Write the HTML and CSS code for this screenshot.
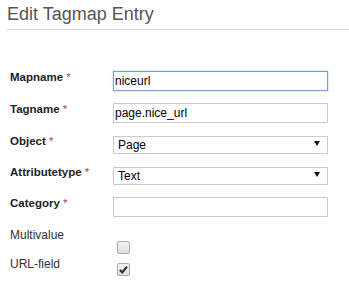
FILE: index.html
```html
<!DOCTYPE html>
<html>
<head>
    <title>Edit Tagmap Entry</title>
    <link rel="stylesheet" href="styles.css">
</head>
<body>
    <div class="page-header">
        <h1>Edit Tagmap Entry</h1>
    </div>

    <form class="tagmap-form">
        <div class="form-row">
            <label class="req" for="mapname">Mapname <span class="star">*</span></label>
            <input id="mapname" class="field focused" type="text" value="niceurl">
        </div>
        <div class="form-row">
            <label class="req" for="tagname">Tagname <span class="star">*</span></label>
            <input id="tagname" class="field" type="text" value="page.nice_url">
        </div>
        <div class="form-row">
            <label class="req" for="object">Object <span class="star">*</span></label>
            <span class="select-wrap">
                <select id="object" class="field select">
                    <option>Page</option>
                </select>
            </span>
        </div>
        <div class="form-row">
            <label class="req" for="attrtype">Attributetype <span class="star">*</span></label>
            <span class="select-wrap">
                <select id="attrtype" class="field select">
                    <option>Text</option>
                </select>
            </span>
        </div>
        <div class="form-row">
            <label class="req" for="category">Category <span class="star">*</span></label>
            <input id="category" class="field" type="text" value="">
        </div>
        <div class="form-row check-row multi">
            <label>Multivalue</label>
            <span class="check"></span>
        </div>
        <div class="form-row check-row url">
            <label>URL-field</label>
            <span class="check checked">
                <svg width="11" height="11" viewBox="0 0 11 11">
                    <path d="M1.8 6 L4.2 8.4 L9 2.6" fill="none" stroke="#2b2b2b" stroke-width="2"/>
                </svg>
            </span>
        </div>
    </form>
</body>
</html>
```

FILE: styles.css
```css
body {
    margin: 0;
    font-family: "Liberation Sans", Arial, sans-serif;
    background: #fff;
    color: #333;
}
.page-header {
    margin-left: 6px;
    padding: 4px 0 4px 1px;
    border-bottom: 1px solid #ddd;
}
.page-header h1 {
    margin: 0;
    font-size: 18px;
    font-weight: normal;
    line-height: 21px;
    color: #555;
}
.tagmap-form {
    padding: 41px 0 0 10px;
}
.form-row {
    display: flex;
    align-items: flex-start;
    margin-bottom: 12px;
}
.form-row label {
    flex: 0 0 103px;
    font-size: 12px;
    line-height: 13px;
    color: #333;
}
.form-row label.req {
    font-size: 11.5px;
    font-weight: bold;
    color: #1e1e1e;
}
.star {
    font-weight: normal;
    color: #a94442;
}
.field {
    box-sizing: border-box;
    width: 215px;
    height: 20px;
    margin: 0;
    padding: 0 0 0 1px;
    border: 1px solid #ccc;
    border-radius: 0;
    font-family: "Liberation Sans", Arial, sans-serif;
    font-size: 12px;
    color: #000;
    background: #fff;
    outline: none;
}
.field.focused {
    border-color: #76a2da;
    box-shadow: 0 0 2px #a6c6ee;
}
.select-wrap {
    position: relative;
    display: block;
}
.select {
    -webkit-appearance: none;
    appearance: none;
    height: 18px;
    padding-left: 4px;
}
.select-wrap::after {
    content: "";
    position: absolute;
    top: 6px;
    right: 8px;
    border-left: 3px solid transparent;
    border-right: 3px solid transparent;
    border-top: 5px solid #111;
    pointer-events: none;
}
.check-row {
    margin-bottom: 4px;
}
.check {
    box-sizing: border-box;
    display: flex;
    align-items: center;
    justify-content: center;
    width: 13px;
    height: 13px;
    margin-left: 4px;
    border: 1px solid #acacac;
    border-radius: 2px;
    background: linear-gradient(#f4f4f4, #dedede);
}
.multi .check {
    margin-top: 12px;
}
.url .check {
    margin-top: 5px;
}
```
